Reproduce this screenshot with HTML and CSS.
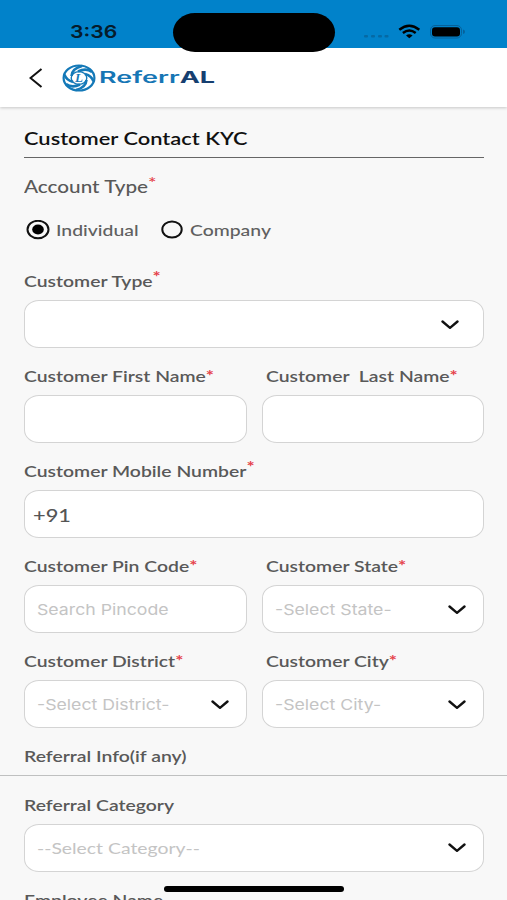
FILE: index.html
```html
<!DOCTYPE html>
<html lang="en">
<head>
<meta charset="utf-8">
<title>ReferrAL</title>
<link rel="stylesheet" href="styles.css">
</head>
<body>
<div class="screen">
  <div class="status">
    <span class="time"><span class="wide">3:36</span></span>
    <span class="island"></span>
    <svg class="signals" width="104" height="20" viewBox="0 0 104 20">
      <g fill="#0569a4"><rect x="1" y="11" width="4" height="2.500" rx="1"/><rect x="8" y="11" width="4" height="2.500" rx="1"/><rect x="15" y="11" width="4" height="2.500" rx="1"/><rect x="21.500" y="11" width="4" height="2.500" rx="1"/></g>
      <g fill="none" stroke="#000" stroke-width="2.500"><path d="M36.300 5.700Q46.300-2.200 56.300 5.700"/><path d="M39.900 8.900Q46.300 4 52.700 8.900"/></g>
      <path d="M43 11.500Q46.300 9.200 49.600 11.500L46.300 14.200Z"/>
      <rect x="67.500" y="1.500" width="31" height="12.500" rx="4.500" fill="none" stroke="#06619a"/>
      <rect x="69" y="3.200" width="28" height="9.200" rx="3"/>
      <path d="M100 5.500q2 .5 2 2.300t-2 2.300z" fill="#06619a"/>
    </svg>
  </div>
  <header class="header">
    <svg class="back" width="14" height="20" viewBox="0 0 14 20"><path d="M12.500 1L1.500 10l11 9" fill="none" stroke="#111" stroke-width="2"/></svg>
    <svg class="emblem" width="34" height="28" viewBox="0 0 34 28">
      <g fill="none" stroke="#1479b8">
        <ellipse cx="17" cy="14" rx="15.400" ry="12.500" stroke-width="2.200"/>
        <ellipse cx="17" cy="14" rx="7.800" ry="6.400" stroke-width="1.400"/>
        <g stroke-width="2.600">
          <path d="M9.500 12Q10 4.500 20 2"/><path d="M16 7.500Q24 3.500 30 8"/>
          <path d="M24.500 16Q24 23.500 14 26"/><path d="M18 20.500Q10 24.500 4 20"/>
          <path d="M23 10Q30 12 31.500 17.500"/><path d="M11 18Q4 16 2.500 10.500"/>
        </g>
      </g>
      <text x="13" y="18.300" class="monogram">L</text>
    </svg>
    <span class="brand"><span class="wide">Referr<b>AL</b></span></span>
  </header>
  <main>
    <h1 class="title"><span class="wide">Customer Contact KYC</span></h1>
    <div class="account lbl light"><span class="wide">Account Type<i class="high">*</i></span></div>
    <div class="radios">
      <svg width="24" height="20" viewBox="0 0 24 20"><ellipse cx="12" cy="9.500" rx="10.500" ry="8.700" fill="none" stroke="#111" stroke-width="2"/><ellipse cx="12" cy="9.500" rx="5.800" ry="4.900"/></svg>
      <span class="opt first"><span class="wide">Individual</span></span>
      <svg width="24" height="20" viewBox="0 0 24 20"><ellipse cx="12" cy="9.500" rx="9.700" ry="8" fill="none" stroke="#111" stroke-width="2"/></svg>
      <span class="opt"><span class="wide">Company</span></span>
    </div>
    <div class="field"><label class="lbl"><span class="wide">Customer Type<i class="high">*</i></span></label>
      <div class="box inset"><svg class="chev" width="18" height="10" viewBox="0 0 18 10"><path d="M1.500 1.500L9 7.800l7.500-6.300"/></svg></div></div>
    <div class="pair">
      <div class="field"><label class="lbl"><span class="wide">Customer First Name<i>*</i></span></label><div class="box"></div></div>
      <div class="field"><label class="lbl"><span class="wide">Customer&nbsp; Last Name<i>*</i></span></label><div class="box"></div></div>
    </div>
    <div class="field"><label class="lbl"><span class="wide">Customer Mobile Number<i class="high">*</i></span></label>
      <div class="box phone"><span class="wide">+91</span></div></div>
    <div class="pair">
      <div class="field"><label class="lbl"><span class="wide">Customer Pin Code<i>*</i></span></label><div class="box"><span class="wide">Search Pincode</span></div></div>
      <div class="field"><label class="lbl"><span class="wide">Customer State<i>*</i></span></label><div class="box"><span class="wide">-Select State-</span><svg class="chev" width="18" height="10" viewBox="0 0 18 10"><path d="M1.500 1.500L9 7.800l7.500-6.300"/></svg></div></div>
    </div>
    <div class="pair">
      <div class="field"><label class="lbl"><span class="wide">Customer District<i>*</i></span></label><div class="box"><span class="wide">-Select District-</span><svg class="chev" width="18" height="10" viewBox="0 0 18 10"><path d="M1.500 1.500L9 7.800l7.500-6.300"/></svg></div></div>
      <div class="field"><label class="lbl"><span class="wide">Customer City<i>*</i></span></label><div class="box"><span class="wide">-Select City-</span><svg class="chev" width="18" height="10" viewBox="0 0 18 10"><path d="M1.500 1.500L9 7.800l7.500-6.300"/></svg></div></div>
    </div>
    <div class="section lbl"><span class="wide">Referral Info(if any)</span></div>
    <div class="field"><label class="lbl"><span class="wide">Referral Category</span></label>
      <div class="box category"><span class="wide">--Select Category--</span><svg class="chev" width="18" height="10" viewBox="0 0 18 10"><path d="M1.500 1.500L9 7.800l7.500-6.300"/></svg></div></div>
    <div class="lbl"><span class="wide">Employee Name</span></div>
  </main>
  <div class="home"></div>
</div>
</body>
</html>
```
FILE: styles.css
```css
* { box-sizing: border-box; }
body { margin: 0; background: #f8f8f8; font-family: Lato, sans-serif; }
.screen { position: relative; width: 507px; height: 900px; overflow: hidden; background: #f8f8f8; }
.wide { display: inline-block; white-space: pre; transform: scaleX(1.21); transform-origin: 0 50%; }
svg { flex: none; display: block; }

.status { position: relative; z-index: 2; height: 48px; background: #0182ca; display: flex; padding: 0 40px 0 70px; justify-content: space-between; }
.time { font: 600 17.5px/20px Inter, sans-serif; padding-top: 22px; color: #061c2b; }
.time .wide { transform: scaleX(1.21); }
.island { position: absolute; left: 173px; top: 13px; width: 162px; height: 39px; border-radius: 22px / 19.5px; background: #000; }
.signals { margin-top: 24px; }

.header { position: relative; height: 59px; background: #fff; display: flex; align-items: center; padding-left: 29px; box-shadow: 0 1px 3px rgba(0,0,0,.2); }
.emblem { margin-left: 19px; }
.brand { font: 600 15.5px/20px Inter, sans-serif; color: #1676b5; margin-left: 3px; }
.brand .wide { transform: scaleX(1.74); }
.brand b { color: #163f70; font-weight: 700; }
.monogram { font: italic 700 13px "Liberation Serif", serif; fill: #1479b8; }

main { padding: 0 23px 0 24px; }
.title { margin: 0; height: 51px; padding-top: 19.500px; font-size: 18px; line-height: 22px; font-weight: 600; color: #111; border-bottom: 1px solid #666; }
.title .wide { transform: scaleX(1.215); }
.lbl { display: block; height: 47px; padding-top: 18px; font-size: 16px; line-height: 20px; font-weight: 600; color: #595959; }
.lbl i { font-style: normal; font-weight: 700; color: #e5434b; font-size: 16px; line-height: 1px; position: relative; top: -1px; }
.lbl i.high { top: -5px; }
.lbl.light { font-weight: 500; font-size: 16.5px; padding-top: 19px; }
.light .wide { transform: scaleX(1.255); }
.light i { font-weight: 500; }
.account { height: 57px; }
.radios { height: 30px; display: flex; align-items: center; padding-left: 2px; font-size: 16px; font-weight: 500; color: #606060; }
.opt { margin-left: 6px; padding-bottom: 2px; }
.opt.first { width: 104px; }
.account + .radios + .field { margin-top: 6.500px; }
.radios + .field .lbl { height: 48.500px; padding-top: 19px; }
.box { height: 48px; background: #fff; border: 1px solid #d4d4d4; border-radius: 15px / 13px; padding: 2px 17px 0 12px; display: flex; align-items: center; font: 400 15px/20px Inter, sans-serif; color: #c4c4c4; }
.box .wide { transform: scaleX(1.18); }
.box.inset { padding-right: 24px; }
.box.phone { font: 500 18px/20px Lato, sans-serif; color: #555; padding-left: 8px; }
.box.category { font-family: Lato, sans-serif; font-size: 16px; padding-top: 0; }
.category .wide, .phone .wide { transform: scaleX(1.21); }
.chev { margin-left: auto; fill: none; stroke: #111; stroke-width: 2.400; stroke-linecap: round; stroke-linejoin: round; }
.pair { display: grid; grid-template-columns: 1fr 1fr; gap: 15px; }
.pair .field:last-child .lbl { padding-left: 4px; }
.section { margin: 0 -23px 0 -24px; padding-left: 24px; height: 48px; border-bottom: 1px solid #bfc0c0; }
.section + .field .lbl { height: 48px; padding-top: 19px; }
.home { position: absolute; left: 164px; top: 886px; width: 180px; height: 5.500px; border-radius: 3px; background: #000; }
```
